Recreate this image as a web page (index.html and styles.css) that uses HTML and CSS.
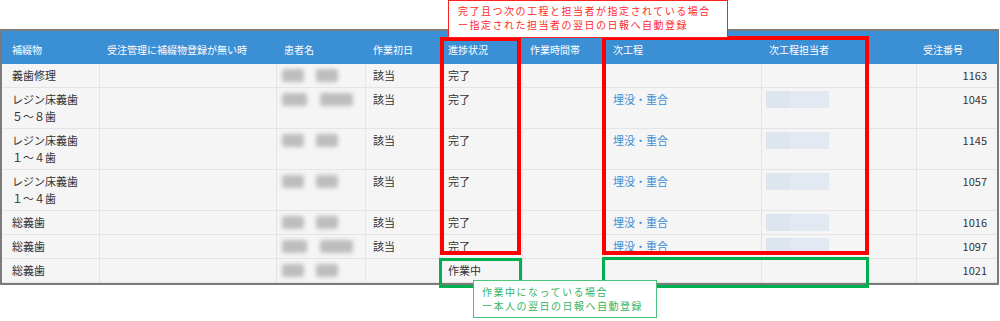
FILE: index.html
```html
<!DOCTYPE html>
<html lang="ja">
<head>
<meta charset="utf-8">
<title>日報自動登録</title>
<link rel="stylesheet" href="styles.css">
</head>
<body>
<div class="page">
  <div class="grid">
    <div class="h c1">補綴物</div>
    <div class="h">受注管理に補綴物登録が無い時</div>
    <div class="h">患者名</div>
    <div class="h">作業初日</div>
    <div class="h c5">進捗状況</div>
    <div class="h">作業時間帯</div>
    <div class="h c7">次工程</div>
    <div class="h">次工程担当者</div>
    <div class="h c9">受注番号</div>

    <div class="d c1">義歯修理</div>
    <div class="d"></div>
    <div class="d name"><i class="b1"></i><i class="b2"></i></div>
    <div class="d">該当</div>
    <div class="d c5">完了</div>
    <div class="d"></div>
    <div class="d c7"></div>
    <div class="d"></div>
    <div class="d num">1163</div>

    <div class="d c1">レジン床義歯<br>５～８歯</div>
    <div class="d"></div>
    <div class="d name wide"><i class="b1"></i><i class="b2"></i></div>
    <div class="d">該当</div>
    <div class="d c5">完了</div>
    <div class="d"></div>
    <div class="d c7"><span class="link">埋没・重合</span></div>
    <div class="d pcell"><span class="person"></span></div>
    <div class="d num">1045</div>

    <div class="d c1">レジン床義歯<br>１～４歯</div>
    <div class="d"></div>
    <div class="d name"><i class="b1"></i><i class="b2"></i></div>
    <div class="d">該当</div>
    <div class="d c5">完了</div>
    <div class="d"></div>
    <div class="d c7"><span class="link">埋没・重合</span></div>
    <div class="d pcell"><span class="person"></span></div>
    <div class="d num">1145</div>

    <div class="d c1">レジン床義歯<br>１～４歯</div>
    <div class="d"></div>
    <div class="d name"><i class="b1"></i><i class="b2"></i></div>
    <div class="d">該当</div>
    <div class="d c5">完了</div>
    <div class="d"></div>
    <div class="d c7"><span class="link">埋没・重合</span></div>
    <div class="d pcell"><span class="person"></span></div>
    <div class="d num">1057</div>

    <div class="d c1">総義歯</div>
    <div class="d"></div>
    <div class="d name"><i class="b1"></i><i class="b2"></i></div>
    <div class="d">該当</div>
    <div class="d c5">完了</div>
    <div class="d"></div>
    <div class="d c7"><span class="link">埋没・重合</span></div>
    <div class="d pcell"><span class="person"></span></div>
    <div class="d num">1016</div>

    <div class="d c1">総義歯</div>
    <div class="d"></div>
    <div class="d name wide"><i class="b1"></i><i class="b2"></i></div>
    <div class="d">該当</div>
    <div class="d c5">完了</div>
    <div class="d"></div>
    <div class="d c7"><span class="link">埋没・重合</span></div>
    <div class="d pcell"><span class="person"></span></div>
    <div class="d num">1097</div>

    <div class="d c1 last">総義歯</div>
    <div class="d last"></div>
    <div class="d name last"><i class="b1"></i><i class="b2"></i></div>
    <div class="d last"></div>
    <div class="d c5 last">作業中</div>
    <div class="d last"></div>
    <div class="d c7 last"></div>
    <div class="d last"></div>
    <div class="d num last">1021</div>
  </div>

  <div class="mark red red1"></div>
  <div class="mark red red2"></div>
  <div class="mark green green1"></div>
  <div class="mark green green2"></div>

  <div class="note note-red">完了且つ次の工程と担当者が指定されている場合<br>ー指定された担当者の翌日の日報へ自動登録</div>
  <div class="note note-green">作業中になっている場合<br>ー本人の翌日の日報へ自動登録</div>
</div>
</body>
</html>
```

FILE: styles.css
```css
html, body {
  margin: 0;
  padding: 0;
  background: #ffffff;
}

body {
  font-family: "Noto Sans CJK JP", "Noto Sans", sans-serif;
  color: #333333;
}

.page {
  position: relative;
  width: 1000px;
  height: 321px;
  overflow: hidden;
}

.grid {
  margin-top: 29px;
  display: grid;
  grid-template-columns: 98px 177px 89px 74px 83px 82px 157px 155px 80px;
  width: 995px;
  border: 2px solid #7b7b7b;
  background: #f5f5f5;
}

.h {
  box-sizing: border-box;
  height: 33px;
  padding: 3px 7px 0;
  background: #3b8fd5;
  color: #ffffff;
  font-size: 10px;
  display: flex;
  align-items: center;
  white-space: nowrap;
}

.d {
  box-sizing: border-box;
  padding: 3px 7px;
  font-size: 11px;
  line-height: 17px;
  border-right: 1px solid #e4e4e4;
  border-bottom: 1px solid #e4e4e4;
  white-space: nowrap;
}

.d.num {
  border-right: none;
  text-align: right;
  padding-right: 10px;
}

.c1 { padding-left: 10px; }
.c5 { padding-left: 8px; }
.c7 { padding-left: 8px; }
.h.c9 { padding-left: 6px; }

.name {
  display: flex;
  align-items: flex-start;
  padding-left: 5px;
}

.name i {
  display: block;
  height: 13px;
  margin-top: 2px;
  border-radius: 3px;
  background: #bdbdbd;
  filter: blur(2px);
}

.name .b1 { width: 22px; }
.name .b2 { width: 22px; margin-left: 12px; }
.name.wide .b1 { width: 25px; }
.name.wide .b2 { width: 33px; margin-left: 13px; }

.link {
  color: #3d8fd3;
}

.pcell {
  padding-left: 4px;
}

.person {
  display: block;
  width: 63px;
  height: 17px;
  background: linear-gradient(to right, #dde5ef 0, #dde5ef 38%, #e2e9f2 38%, #e2e9f2 100%);
}

.mark {
  position: absolute;
  box-sizing: border-box;
}

.red { border: 4px solid #ff0000; }
.green { border: 3px solid #00b050; }

.red1 { left: 440px; top: 37px; width: 81px; height: 218px; }
.red2 { left: 602px; top: 36px; width: 267px; height: 219px; }
.green1 { left: 439px; top: 258px; width: 83px; height: 30px; }
.green2 { left: 602px; top: 257px; width: 267px; height: 31px; }

.note {
  position: absolute;
  box-sizing: border-box;
  height: 38px;
  background: #ffffff;
  font-size: 10px;
  line-height: 14px;
  letter-spacing: 1.5px;
  white-space: nowrap;
}

.note-red {
  left: 448px;
  top: 0;
  width: 280px;
  padding: 3px 0 0 9px;
  border: 1px solid #ff2020;
  color: #ff2a2a;
}

.note-green {
  left: 473px;
  top: 280px;
  width: 184px;
  padding: 4px 0 0 8px;
  border: 1px solid #4cc27a;
  color: #35b565;
}
```
